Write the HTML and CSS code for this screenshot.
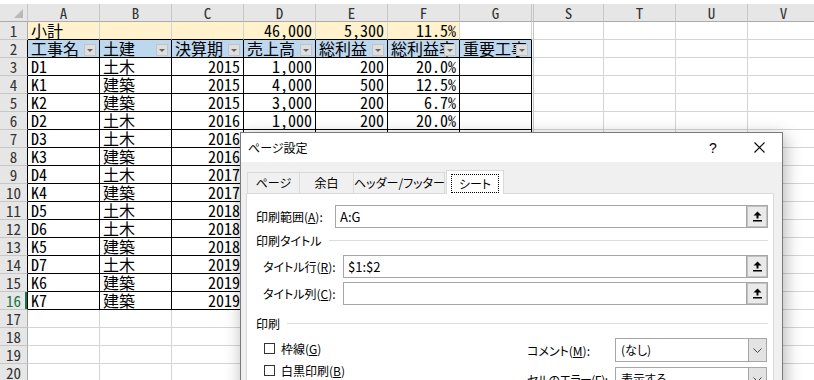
FILE: index.html
```html
<!DOCTYPE html>
<html lang="ja">
<head>
    <meta charset="UTF-8">
    <title>ページ設定</title>
    <link rel="stylesheet" href="styles.css">
</head>
<body>
    <table class="sheet">
        <colgroup>
            <col class="c-head">
            <col class="c-cell"><col class="c-cell"><col class="c-cell"><col class="c-cell"><col class="c-cell"><col class="c-cell"><col class="c-cell">
            <col class="c-hid">
            <col class="c-s"><col class="c-cell"><col class="c-cell"><col class="c-cell">
        </colgroup>
        <thead>
            <tr><th class="corner"><span class="corner-mark"></span></th><th>A</th><th>B</th><th>C</th><th>D</th><th>E</th><th>F</th><th>G</th><th class="hid"></th><th>S</th><th>T</th><th>U</th><th>V</th></tr>
        </thead>
        <tbody>
            <tr><th>1</th><td class="sub">小計</td><td class="sub"></td><td class="sub"></td><td class="sub num">46,000</td><td class="sub num">5,300</td><td class="sub num">11.5%</td><td class="top"></td><td class="hid"></td><td></td><td></td><td></td><td></td></tr>
            <tr><th class="edge">2</th><td class="fh">工事名<span class="filter"></span></td><td class="fh">土建<span class="filter"></span></td><td class="fh">決算期<span class="filter"></span></td><td class="fh">売上高<span class="filter"></span></td><td class="fh">総利益<span class="filter"></span></td><td class="fh">総利益率<span class="filter"></span></td><td class="fh">重要工事<span class="filter"></span></td><td class="hid"></td><td></td><td></td><td></td><td></td></tr>
            <tr><th class="edge">3</th><td class="d">D1</td><td class="d">土木</td><td class="d num">2015</td><td class="d num">1,000</td><td class="d num">200</td><td class="d num">20.0%</td><td class="d"></td><td class="hid"></td><td></td><td></td><td></td><td></td></tr>
            <tr><th class="edge">4</th><td class="d">K1</td><td class="d">建築</td><td class="d num">2015</td><td class="d num">4,000</td><td class="d num">500</td><td class="d num">12.5%</td><td class="d"></td><td class="hid"></td><td></td><td></td><td></td><td></td></tr>
            <tr><th class="edge">5</th><td class="d">K2</td><td class="d">建築</td><td class="d num">2015</td><td class="d num">3,000</td><td class="d num">200</td><td class="d num">6.7%</td><td class="d"></td><td class="hid"></td><td></td><td></td><td></td><td></td></tr>
            <tr><th class="edge">6</th><td class="d">D2</td><td class="d">土木</td><td class="d num">2016</td><td class="d num">1,000</td><td class="d num">200</td><td class="d num">20.0%</td><td class="d"></td><td class="hid"></td><td></td><td></td><td></td><td></td></tr>
            <tr><th class="edge">7</th><td class="d">D3</td><td class="d">土木</td><td class="d num">2016</td><td class="d num">2,000</td><td class="d num">300</td><td class="d num">15.0%</td><td class="d"></td><td class="hid"></td><td></td><td></td><td></td><td></td></tr>
            <tr><th class="edge">8</th><td class="d">K3</td><td class="d">建築</td><td class="d num">2016</td><td class="d num">5,000</td><td class="d num">600</td><td class="d num">12.0%</td><td class="d"></td><td class="hid"></td><td></td><td></td><td></td><td></td></tr>
            <tr><th class="edge">9</th><td class="d">D4</td><td class="d">土木</td><td class="d num">2017</td><td class="d num">3,000</td><td class="d num">400</td><td class="d num">13.3%</td><td class="d"></td><td class="hid"></td><td></td><td></td><td></td><td></td></tr>
            <tr><th class="edge">10</th><td class="d">K4</td><td class="d">建築</td><td class="d num">2017</td><td class="d num">4,000</td><td class="d num">500</td><td class="d num">12.5%</td><td class="d"></td><td class="hid"></td><td></td><td></td><td></td><td></td></tr>
            <tr><th class="edge">11</th><td class="d">D5</td><td class="d">土木</td><td class="d num">2018</td><td class="d num">2,000</td><td class="d num">200</td><td class="d num">10.0%</td><td class="d"></td><td class="hid"></td><td></td><td></td><td></td><td></td></tr>
            <tr><th class="edge">12</th><td class="d">D6</td><td class="d">土木</td><td class="d num">2018</td><td class="d num">3,000</td><td class="d num">300</td><td class="d num">10.0%</td><td class="d"></td><td class="hid"></td><td></td><td></td><td></td><td></td></tr>
            <tr><th class="edge">13</th><td class="d">K5</td><td class="d">建築</td><td class="d num">2018</td><td class="d num">6,000</td><td class="d num">700</td><td class="d num">11.7%</td><td class="d"></td><td class="hid"></td><td></td><td></td><td></td><td></td></tr>
            <tr><th class="edge">14</th><td class="d">D7</td><td class="d">土木</td><td class="d num">2019</td><td class="d num">2,000</td><td class="d num">200</td><td class="d num">10.0%</td><td class="d"></td><td class="hid"></td><td></td><td></td><td></td><td></td></tr>
            <tr><th class="edge">15</th><td class="d">K6</td><td class="d">建築</td><td class="d num">2019</td><td class="d num">5,000</td><td class="d num">500</td><td class="d num">10.0%</td><td class="d"></td><td class="hid"></td><td></td><td></td><td></td><td></td></tr>
            <tr><th class="edge active">16</th><td class="d">K7</td><td class="d">建築</td><td class="d num">2019</td><td class="d num">3,000</td><td class="d num">300</td><td class="d num">10.0%</td><td class="d"></td><td class="hid"></td><td></td><td></td><td></td><td></td></tr>
            <tr><th>17</th><td></td><td></td><td></td><td></td><td></td><td></td><td></td><td class="hid"></td><td></td><td></td><td></td><td></td></tr>
            <tr><th>18</th><td></td><td></td><td></td><td></td><td></td><td></td><td></td><td class="hid"></td><td></td><td></td><td></td><td></td></tr>
            <tr><th>19</th><td></td><td></td><td></td><td></td><td></td><td></td><td></td><td class="hid"></td><td></td><td></td><td></td><td></td></tr>
            <tr><th>20</th><td></td><td></td><td></td><td></td><td></td><td></td><td></td><td class="hid"></td><td></td><td></td><td></td><td></td></tr>
        </tbody>
    </table>

    <div class="dialog">
        <div class="titlebar">
            <span class="title">ページ設定</span>
            <span class="tb-btn">?</span>
            <span class="tb-btn">
                <svg width="11" height="11" viewBox="0 0 11 11"><path d="M0.5 0.5 L10.5 10.5 M10.5 0.5 L0.5 10.5" stroke="#000" stroke-width="1.1" fill="none"/></svg>
            </span>
        </div>
        <div class="dlg-body">
            <div class="tabs">
                <div class="tab t-page">ページ</div>
                <div class="tab t-margin">余白</div>
                <div class="tab t-header">ヘッダー/フッター</div>
                <div class="tab active"><span class="focus">シート</span></div>
            </div>
            <div class="panel">
                <div class="field">
                    <label class="lbl">印刷範囲(<u>A</u>):</label>
                    <div class="input">A:G
                        <span class="refbtn"><svg width="9" height="11" viewBox="0 0 9 11"><path d="M4.5 0.5 L8.5 4.5 H5.5 V7.5 H3.5 V4.5 H0.5 Z" fill="#000"/><rect x="0" y="9" width="9" height="1.5" fill="#000"/></svg></span>
                    </div>
                </div>
                <div class="group first"><span>印刷タイトル</span><span class="rule"></span></div>
                <div class="field indent">
                    <label class="lbl">タイトル行(<u>R</u>):</label>
                    <div class="input">$1:$2
                        <span class="refbtn"><svg width="9" height="11" viewBox="0 0 9 11"><path d="M4.5 0.5 L8.5 4.5 H5.5 V7.5 H3.5 V4.5 H0.5 Z" fill="#000"/><rect x="0" y="9" width="9" height="1.5" fill="#000"/></svg></span>
                    </div>
                </div>
                <div class="field indent next">
                    <label class="lbl">タイトル列(<u>C</u>):</label>
                    <div class="input">
                        <span class="refbtn"><svg width="9" height="11" viewBox="0 0 9 11"><path d="M4.5 0.5 L8.5 4.5 H5.5 V7.5 H3.5 V4.5 H0.5 Z" fill="#000"/><rect x="0" y="9" width="9" height="1.5" fill="#000"/></svg></span>
                    </div>
                </div>
                <div class="group second"><span>印刷</span><span class="rule"></span></div>
                <div class="print-opts">
                    <div class="checks">
                        <div class="check"><span class="box"></span><span>枠線(<u>G</u>)</span></div>
                        <div class="check"><span class="box"></span><span>白黒印刷(<u>B</u>)</span></div>
                    </div>
                    <div class="selects">
                        <div class="sel-row">
                            <label class="sel-lbl">コメント(<u>M</u>):</label>
                            <div class="select">(なし)<span class="drop"><svg width="9" height="5" viewBox="0 0 9 5"><path d="M0.5 0.5 L4.5 4.5 L8.5 0.5" stroke="#444" fill="none"/></svg></span></div>
                        </div>
                        <div class="sel-row">
                            <label class="sel-lbl tight">セルのエラー(<u>E</u>):</label>
                            <div class="select">表示する<span class="drop"><svg width="9" height="5" viewBox="0 0 9 5"><path d="M0.5 0.5 L4.5 4.5 L8.5 0.5" stroke="#444" fill="none"/></svg></span></div>
                        </div>
                    </div>
                </div>
            </div>
        </div>
    </div>
</body>
</html>
```

FILE: styles.css
```css
* {
    box-sizing: border-box;
}
body {
    margin: 0;
    position: relative;
    width: 814px;
    height: 380px;
    overflow: hidden;
    background-color: #fff;
    font-family: "Noto Sans CJK JP", sans-serif;
    color: #000;
}

/* sheet grid */
.sheet {
    margin-top: 4px;
    border-collapse: separate;
    border-spacing: 0;
    table-layout: fixed;
    width: 820px;
    font-family: "Noto Sans Mono CJK JP", "Noto Sans CJK JP", monospace;
    font-size: 16px;
}
.c-head { width: 28px; }
.c-cell { width: 72px; }
.c-hid { width: 2px; }
.c-s { width: 70px; }
.sheet th, .sheet td {
    height: 18px;
    padding: 0 3px;
    line-height: 17px;
    border-right: 1px solid #d4d4d4;
    border-bottom: 1px solid #d4d4d4;
    white-space: nowrap;
    overflow: hidden;
    font-weight: normal;
    text-align: left;
}
.sheet thead th {
    background-color: #e6e6e6;
    color: #333;
    font-size: 15px;
    text-align: center;
    border-right-color: #c6c6c6;
    border-bottom-color: #ababab;
}
.sheet tbody th {
    background-color: #e6e6e6;
    color: #333;
    font-size: 15px;
    text-align: center;
    padding: 0;
    border-right-color: #ababab;
    border-bottom-color: #c6c6c6;
}
.sheet th.corner {
    position: relative;
}
.corner-mark {
    position: absolute;
    right: 4px;
    bottom: 3px;
    border-left: 9px solid transparent;
    border-bottom: 9px solid #b9b9b9;
}
.sheet tbody th.edge {
    border-right-color: #000;
}
.sheet tbody th.active {
    color: #217346;
    box-shadow: inset -2px 0 0 #217346;
}
.sheet td.hid, .sheet th.hid {
    padding: 0;
    border-right-color: #c6c6c6;
}
.sheet td.sub {
    background-color: #fff2cc;
    border-bottom-color: #000;
}
.sheet td.top {
    border-bottom-color: #000;
}
.sheet td.fh {
    position: relative;
    background-color: #bdd7ee;
    border-right-color: #000;
    border-bottom-color: #000;
}
.sheet td.d {
    border-right-color: #000;
    border-bottom-color: #000;
}
.sheet td.num {
    text-align: right;
}
.filter {
    position: absolute;
    right: 3px;
    top: 4px;
    width: 12px;
    height: 12px;
    background-color: #dedede;
    border: 1px solid #c4c4c4;
}
.filter::after {
    content: "";
    position: absolute;
    left: 2px;
    top: 4px;
    border-left: 3px solid transparent;
    border-right: 3px solid transparent;
    border-top: 3px solid #666;
}

/* page setup dialog */
.dialog {
    position: absolute;
    left: 240px;
    top: 132px;
    width: 543px;
    height: 280px;
    background-color: #f0f0f0;
    border: 1px solid #7a7a7a;
    box-shadow: 2px 4px 16px rgba(0, 0, 0, 0.3);
    font-size: 12px;
    font-feature-settings: "palt";
    white-space: nowrap;
}
.titlebar {
    display: flex;
    align-items: center;
    height: 29px;
    background-color: #fff;
}
.title {
    flex: 1;
    padding-left: 7px;
}
.tb-btn {
    display: flex;
    align-items: center;
    justify-content: center;
    width: 46px;
    height: 29px;
    font-family: "Liberation Sans", sans-serif;
    font-size: 14px;
}
.dlg-body {
    padding: 8px 8px 0 5px;
}
.tabs {
    display: flex;
    align-items: flex-end;
    padding-left: 1px;
}
.tab {
    height: 21px;
    line-height: 19px;
    text-align: center;
    border: 1px solid #d9d9d9;
    border-bottom: none;
    border-right: none;
}
.t-page { width: 52px; }
.t-margin { width: 54px; }
.t-header {
    width: 92px;
    border-right: 1px solid #d9d9d9;
}
.tab.active {
    position: relative;
    width: 58px;
    height: 24px;
    margin-left: 1px;
    margin-bottom: -1px;
    padding-top: 3px;
    background-color: #fff;
    border-right: 1px solid #d9d9d9;
    z-index: 1;
}
.focus {
    display: inline-block;
    line-height: 17px;
    padding: 0 7px;
    border: 1px dotted #000;
}
.panel {
    height: 220px;
    padding: 11px 5px 0 9px;
    background-color: #fff;
    border: 1px solid #d9d9d9;
}
.field {
    display: flex;
    align-items: center;
    height: 23px;
}
.field.indent {
    padding-left: 7px;
}
.field.next {
    margin-top: 4px;
}
.lbl {
    width: 79px;
}
.indent .lbl {
    width: 80px;
}
.input {
    position: relative;
    flex: 1;
    height: 23px;
    padding-left: 4px;
    line-height: 21px;
    font-size: 13px;
    border: 1px solid #a6a6a6;
}
.refbtn {
    position: absolute;
    right: -1px;
    top: -1px;
    display: flex;
    align-items: center;
    justify-content: center;
    width: 22px;
    height: 23px;
    background-color: #eaeaea;
    border: 2px solid #c2c2c2;
    outline: 1px solid #a6a6a6;
    outline-offset: -1px;
}
.group {
    display: flex;
    align-items: center;
    gap: 7px;
    height: 20px;
}
.group.first {
    margin: 2px 0 5px;
}
.group.second {
    margin-top: 8px;
}
.rule {
    flex: 1;
    height: 1px;
    background-color: #dcdcdc;
}
.print-opts {
    display: flex;
    padding-top: 4px;
}
.checks {
    width: 271px;
    padding-left: 8px;
}
.check {
    display: flex;
    align-items: center;
    gap: 6px;
    height: 22px;
}
.box {
    width: 11px;
    height: 11px;
    border: 1px solid #333;
    background-color: #fff;
}
.selects {
    flex: 1;
    padding-top: 1px;
}
.sel-row {
    display: flex;
    align-items: center;
    height: 24px;
    margin-bottom: 5px;
}
.sel-lbl {
    width: 88px;
}
.sel-lbl.tight {
    letter-spacing: -0.6px;
}
.select {
    position: relative;
    width: 152px;
    height: 24px;
    padding-left: 5px;
    line-height: 22px;
    border: 1px solid #a6a6a6;
}
.drop {
    position: absolute;
    right: 0;
    top: 0;
    display: flex;
    align-items: center;
    justify-content: center;
    width: 18px;
    height: 22px;
    background-color: #e3e3e3;
    border-left: 1px solid #a6a6a6;
}
```
